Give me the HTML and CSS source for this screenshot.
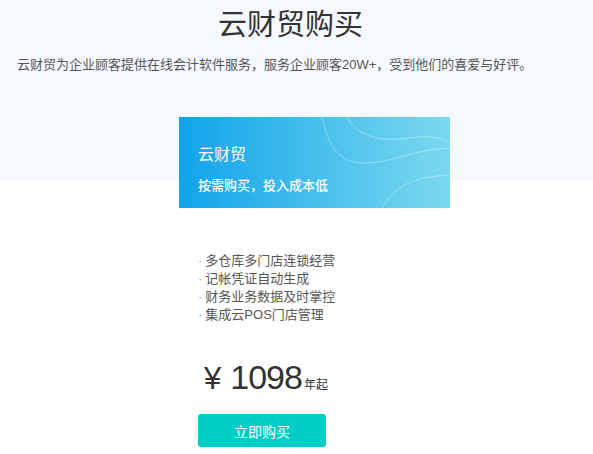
FILE: index.html
```html
<!DOCTYPE html>
<html lang="zh-CN">

<head>
    <meta charset="UTF-8">
    <meta name="viewport" content="width=device-width, initial-scale=1.0">
    <title>云财贸购买</title>
    <link rel="stylesheet" href="styles.css">
</head>

<body>
    <header class="top">
        <h1 class="top-title">云财贸购买</h1>
        <p class="top-desc">云财贸为企业顾客提供在线会计软件服务，服务企业顾客20W+，受到他们的喜爱与好评。</p>
    </header>
    <main class="plan">
        <div class="plan-card">
            <svg class="plan-lines" width="271" height="91" viewBox="0 0 271 91">
                <path d="M143 0 C150 30 160 46 185 46 C215 46 235 32 271 31" />
                <path d="M168 0 C176 16 195 24 220 22 C245 19 262 18 271 27" />
                <path d="M203 91 C215 70 232 60 271 58" />
            </svg>
            <div class="plan-name">云财贸</div>
            <div class="plan-slogan">按需购买，投入成本低</div>
        </div>
        <ul class="plan-list">
            <li>多仓库多门店连锁经营</li>
            <li>记帐凭证自动生成</li>
            <li>财务业务数据及时掌控</li>
            <li>集成云POS门店管理</li>
        </ul>
        <div class="plan-price">
            <span class="plan-yen">¥</span><span class="plan-num">1098</span><span class="plan-unit">年起</span>
        </div>
        <button class="plan-btn">立即购买</button>
    </main>
</body>

</html>
```

FILE: styles.css
```css
* {
    box-sizing: border-box;
}

body {
    margin: 0;
    background: #ffffff;
    font-family: "Liberation Sans", "Noto Sans CJK SC", sans-serif;
    color: #333333;
}

.top {
    height: 180px;
    background: #f5f8fd;
    padding-top: 8px;
}

.top-title {
    margin: 0;
    padding-right: 12px;
    text-align: center;
    font-size: 29px;
    font-weight: normal;
    line-height: 34px;
    color: #333333;
}

.top-desc {
    margin: 14px 0 0 17px;
    font-size: 13px;
    line-height: 18px;
    color: #555555;
}

.plan {
    width: 271px;
    margin: -63px 0 0 179px;
}

.plan-card {
    position: relative;
    height: 91px;
    padding: 27px 0 0 19px;
    background: linear-gradient(to right, #10a4ea, #7cd9ef);
    color: #ffffff;
    overflow: hidden;
}

.plan-lines {
    position: absolute;
    left: 0;
    top: 0;
}

.plan-lines path {
    fill: none;
    stroke: rgba(255, 255, 255, 0.35);
    stroke-width: 1;
}

.plan-name {
    position: relative;
    font-size: 16px;
    line-height: 22px;
}

.plan-slogan {
    position: relative;
    margin-top: 11px;
    font-size: 13px;
    font-weight: 500;
    line-height: 18px;
}

.plan-list {
    list-style: none;
    margin: 44px 0 0 19px;
    padding: 0;
    font-size: 13px;
    line-height: 18px;
    color: #555555;
}

.plan-list li::before {
    content: "·";
    color: #999999;
    margin-right: 3px;
}

.plan-price {
    margin: 36px 0 0 25px;
    line-height: 34px;
    color: #333333;
}

.plan-yen {
    font-size: 31px;
    margin-right: 9px;
}

.plan-num {
    font-size: 34px;
    letter-spacing: -1px;
}

.plan-unit {
    font-size: 12px;
    margin-left: 2px;
}

.plan-btn {
    display: block;
    width: 128px;
    height: 33px;
    margin: 12px 0 0 19px;
    border: none;
    border-radius: 3px;
    background: #00cdc5;
    color: #ffffff;
    font-family: "Liberation Sans", "Noto Sans CJK SC", sans-serif;
    font-size: 14px;
    cursor: pointer;
}
```
